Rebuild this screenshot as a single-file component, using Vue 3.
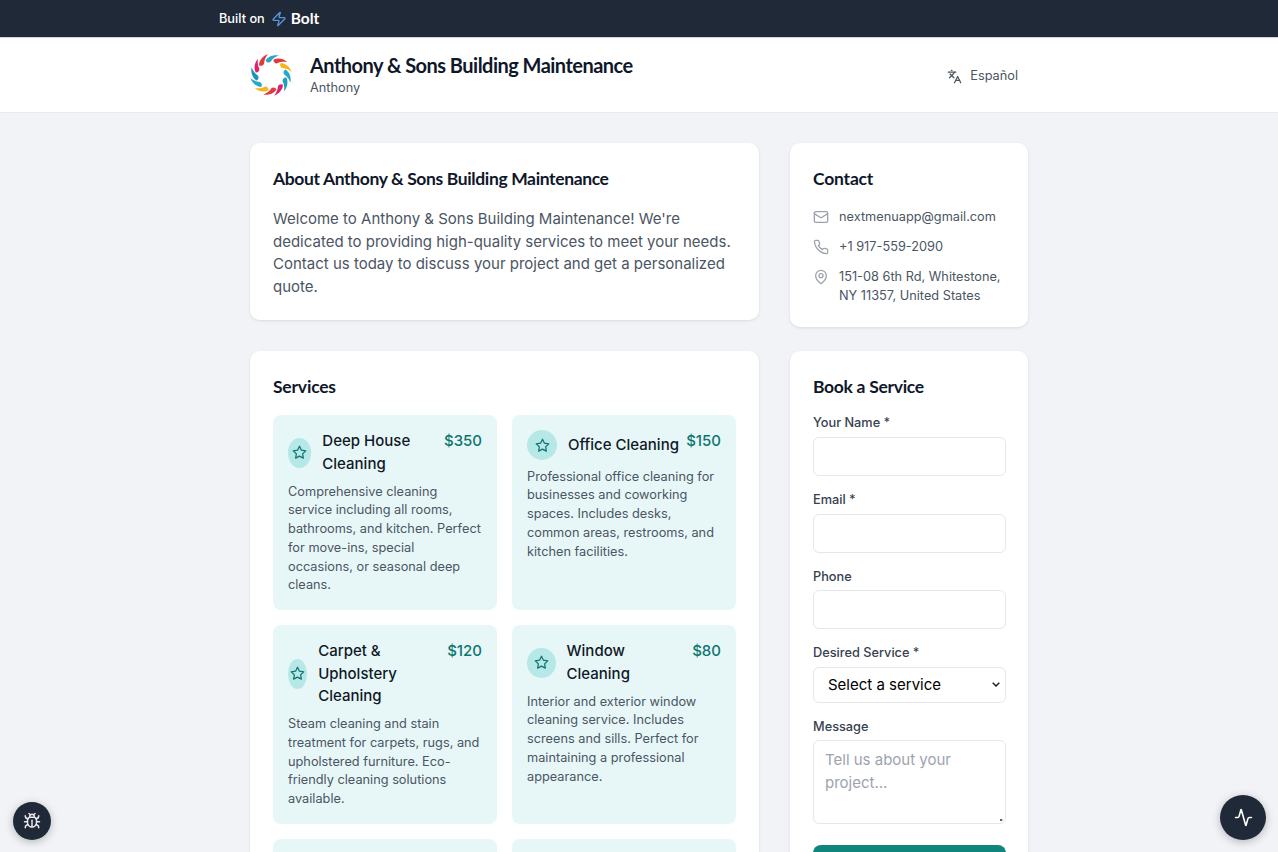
<script setup>
const petalColors = ['#2aa7c9', '#e0393e', '#f7b51c', '#2aa7c9', '#1d9fc0', '#d9236b', '#e0393e', '#f7b51c', '#2aa7c9', '#1d8fc0', '#d9236b', '#e0393e']
const petals = petalColors.map((color, i) => ({ color, transform: `rotate(${i * 30} 20 20)` }))

const services = [
  { name: 'Deep House Cleaning', price: '$350', desc: 'Comprehensive cleaning service including all rooms, bathrooms, and kitchen. Perfect for move-ins, special occasions, or seasonal deep cleans.' },
  { name: 'Office Cleaning', price: '$150', desc: 'Professional office cleaning for businesses and coworking spaces. Includes desks, common areas, restrooms, and kitchen facilities.' },
  { name: 'Carpet & Upholstery Cleaning', price: '$120', desc: 'Steam cleaning and stain treatment for carpets, rugs, and upholstered furniture. Eco-friendly cleaning solutions available.' },
  { name: 'Window Cleaning', price: '$80', desc: 'Interior and exterior window cleaning service. Includes screens and sills. Perfect for maintaining a professional appearance.' },
  { name: '', price: '', desc: '' },
  { name: '', price: '', desc: '' }
]
</script>

<template>
  <div class="page">
    <div class="topbar">
      <div class="topbar-inner">
        <span class="built">Built on</span>
        <svg class="bolt-icon" viewBox="0 0 24 24" fill="none" stroke="currentColor" stroke-width="2" stroke-linecap="round" stroke-linejoin="round"><path d="M4 14a1 1 0 0 1-.78-1.63l9.9-10.2a.5.5 0 0 1 .86.46l-1.92 6.02A1 1 0 0 0 13 10h7a1 1 0 0 1 .78 1.63l-9.9 10.2a.5.5 0 0 1-.86-.46l1.92-6.02A1 1 0 0 0 11 14z"/></svg>
        <span class="bolt">Bolt</span>
      </div>
    </div>

    <header class="header">
      <div class="header-inner">
        <div class="brand">
          <svg class="logo" viewBox="0 0 40 40">
            <path v-for="(p, i) in petals" :key="i" :fill="p.color" :transform="p.transform" d="M14.8 6.2 C16.8 2.7 22 .4 27.3 1.5 C24.5 2.5 21.6 4.4 19.6 7.4 C18.2 8.7 15.6 8.2 14.8 6.2 Z"/>
          </svg>
          <div class="brand-text">
            <h1>Anthony &amp; Sons Building Maintenance</h1>
            <p>Anthony</p>
          </div>
        </div>
        <div class="lang">
          <svg class="lang-icon" viewBox="0 0 24 24" fill="none" stroke="currentColor" stroke-width="2" stroke-linecap="round" stroke-linejoin="round"><path d="m5 8 6 6"/><path d="m4 14 6-6 2-3"/><path d="M2 5h12"/><path d="M7 2h1"/><path d="m22 22-5-10-5 10"/><path d="M14 18h6"/></svg>
          <span>Español</span>
        </div>
      </div>
    </header>

    <main class="main">
      <section class="card about">
        <h2>About Anthony &amp; Sons Building Maintenance</h2>
        <p>Welcome to Anthony &amp; Sons Building Maintenance! We're dedicated to providing high-quality services to meet your needs. Contact us today to discuss your project and get a personalized quote.</p>
      </section>

      <section class="card contact">
        <h2>Contact</h2>
        <div class="contact-list">
          <div class="contact-row">
            <svg viewBox="0 0 24 24" fill="none" stroke="currentColor" stroke-width="2" stroke-linecap="round" stroke-linejoin="round"><rect x="2" y="4" width="20" height="16" rx="2"/><path d="m22 7-8.97 5.7a1.94 1.94 0 0 1-2.06 0L2 7"/></svg>
            <span>nextmenuapp@gmail.com</span>
          </div>
          <div class="contact-row">
            <svg viewBox="0 0 24 24" fill="none" stroke="currentColor" stroke-width="2" stroke-linecap="round" stroke-linejoin="round"><path d="M22 16.92v3a2 2 0 0 1-2.18 2 19.79 19.79 0 0 1-8.63-3.07 19.5 19.5 0 0 1-6-6 19.79 19.79 0 0 1-3.07-8.67A2 2 0 0 1 4.11 2h3a2 2 0 0 1 2 1.72 12.84 12.84 0 0 0 .7 2.81 2 2 0 0 1-.45 2.11L8.09 9.91a16 16 0 0 0 6 6l1.27-1.27a2 2 0 0 1 2.11-.45 12.84 12.84 0 0 0 2.81.7A2 2 0 0 1 22 16.92z"/></svg>
            <span>+1 917-559-2090</span>
          </div>
          <div class="contact-row">
            <svg viewBox="0 0 24 24" fill="none" stroke="currentColor" stroke-width="2" stroke-linecap="round" stroke-linejoin="round"><path d="M20 10c0 6-8 12-8 12s-8-6-8-12a8 8 0 0 1 16 0Z"/><circle cx="12" cy="10" r="3"/></svg>
            <span>151-08 6th Rd, Whitestone, NY 11357, United States</span>
          </div>
        </div>
      </section>

      <section class="card services">
        <h2>Services</h2>
        <div class="service-grid">
          <article v-for="(s, i) in services" :key="i" class="service">
            <div v-if="s.name" class="service-head">
              <div class="service-title">
                <div class="star-wrap">
                  <svg viewBox="0 0 24 24" fill="none" stroke="currentColor" stroke-width="2" stroke-linecap="round" stroke-linejoin="round"><polygon points="12 2 15.09 8.26 22 9.27 17 14.14 18.18 21.02 12 17.77 5.82 21.02 7 14.14 2 9.27 8.91 8.26 12 2"/></svg>
                </div>
                <h3>{{ s.name }}</h3>
              </div>
              <span class="price">{{ s.price }}</span>
            </div>
            <p v-if="s.desc">{{ s.desc }}</p>
          </article>
        </div>
      </section>

      <section class="card booking">
        <h2>Book a Service</h2>
        <form class="form" @submit.prevent>
          <label class="field"><span>Your Name *</span><input type="text" /></label>
          <label class="field"><span>Email *</span><input type="email" /></label>
          <label class="field"><span>Phone</span><input type="tel" /></label>
          <label class="field"><span>Desired Service *</span>
            <select><option>Select a service</option></select>
          </label>
          <label class="field"><span>Message</span>
            <textarea rows="3" placeholder="Tell us about your project..."></textarea>
          </label>
          <button class="submit" type="submit"></button>
        </form>
      </section>
    </main>

    <button class="fab fab-left" aria-label="Debug">
      <svg viewBox="0 0 24 24" fill="none" stroke="currentColor" stroke-width="2" stroke-linecap="round" stroke-linejoin="round"><path d="m8 2 1.88 1.88"/><path d="M14.12 3.88 16 2"/><path d="M9 7.13v-1a3.003 3.003 0 1 1 6 0v1"/><path d="M12 20c-3.3 0-6-2.7-6-6v-3a4 4 0 0 1 4-4h4a4 4 0 0 1 4 4v3c0 3.3-2.7 6-6 6"/><path d="M12 20v-9"/><path d="M6.53 9C4.6 8.8 3 7.1 3 5"/><path d="M6 13H2"/><path d="M3 21c0-2.1 1.7-3.9 3.8-4"/><path d="M20.97 5c0 2.1-1.6 3.8-3.5 4"/><path d="M22 13h-4"/><path d="M17.2 17c2.1.1 3.8 1.9 3.8 4"/></svg>
    </button>
    <button class="fab fab-right" aria-label="Activity">
      <svg viewBox="0 0 24 24" fill="none" stroke="currentColor" stroke-width="2" stroke-linecap="round" stroke-linejoin="round"><path d="M22 12h-2.48a2 2 0 0 0-1.93 1.46l-2.35 8.36a.25.25 0 0 1-.48 0L9.24 2.18a.25.25 0 0 0-.48 0l-2.35 8.36A2 2 0 0 1 4.49 12H2"/></svg>
    </button>
  </div>
</template>

<style>
html, body { margin: 0; background: #f1f3f7; }
</style>

<style scoped>
* { box-sizing: border-box; }
.page {
  height: 852px;
  overflow: hidden;
  background: #f1f3f7;
  font-family: Inter, "Liberation Sans", sans-serif;
  font-size: 12.75px;
  line-height: 18.75px;
  color: #111827;
}
.topbar { height: 38px; background: #1f2937; border-bottom: 1px solid #d1d5db; }
.topbar-inner {
  width: 840px;
  margin: 0 auto;
  height: 37px;
  display: flex;
  align-items: center;
  color: #fff;
}
.built { padding-top: 1px; font-size: 12.75px; font-weight: 500; }
.bolt-icon { width: 16px; height: 16px; margin-left: 6px; color: #5b93d8; }
.bolt { margin-left: 4px; font-size: 15.5px; font-weight: 700; font-family: Lato, sans-serif; }

.header { height: 75px; background: #fff; border-bottom: 1px solid #e9ebef; }
.header-inner {
  width: 778px;
  height: 74px;
  margin: 0 auto;
  display: flex;
  align-items: center;
  justify-content: space-between;
}
.brand { display: flex; align-items: center; }
.logo { width: 42px; height: 42px; margin-right: 18px; }
.brand-text h1 {
  margin: 0;
  font-family: Lato, sans-serif;
  font-size: 20px;
  font-weight: 700;
  letter-spacing: -0.53px;
  line-height: 23px;
  color: #0f172a;
}
.brand-text p { margin: 2px 0 0; font-size: 12.75px; line-height: 18px; color: #4b5563; }
.lang { display: flex; align-items: center; gap: 8px; padding: 2px 10px 0 0; color: #4b5563; font-size: 12.75px; }
.lang-icon { width: 15px; height: 15px; }

.main {
  width: 778px;
  margin: 30px auto 0;
  display: grid;
  grid-template-columns: 509px 238px;
  column-gap: 31px;
  row-gap: 24px;
  align-items: start;
}
.card {
  background: #fff;
  border-radius: 10px;
  padding: 23px 22px 22px 23px;
  box-shadow: 0 1px 3px rgba(0, 0, 0, 0.1);
}
.contact { padding-bottom: 21.5px; }
h2 {
  margin: 0;
  font-family: Lato, sans-serif;
  font-size: 17.5px;
  font-weight: 700;
  letter-spacing: -0.2px;
  line-height: 25px;
  color: #0f172a;
}
.about h2 { letter-spacing: -0.37px; }
.booking h2 { letter-spacing: -0.3px; }
.about p {
  margin: 17px 0 0;
  font-size: 15px;
  line-height: 22.5px;
  color: #4b5563;
}
.contact-list { margin-top: 17px; display: flex; flex-direction: column; gap: 11.25px; }
.contact-row { display: flex; align-items: flex-start; gap: 10px; color: #4b5563; font-size: 12.75px; line-height: 18.75px; }
.contact-row svg { width: 16px; height: 16px; flex: none; margin-top: 1px; color: #9ca3af; }

.service-grid { margin-top: 16px; display: grid; grid-template-columns: 224px 224px; gap: 15px; }
.service { background: #e7f7f8; border-radius: 8px; padding: 15px; min-height: 60px; }
.service-head { display: flex; justify-content: space-between; gap: 7px; }
.service-title { display: flex; align-items: center; gap: 11px; }
.star-wrap {
  flex-shrink: 0.85;
  width: 30px;
  height: 30px;
  border-radius: 50%;
  background: #b5e8e6;
  display: flex;
  align-items: center;
  justify-content: center;
  color: #0f766e;
}
.star-wrap svg { width: 15px; height: 15px; flex: none; }
h3 { margin: 0; font-size: 15px; font-weight: 500; line-height: 22.5px; color: #111827; }
.price { font-size: 15px; font-weight: 500; line-height: 22.5px; color: #0f766e; }
.service p { margin: 7.5px 0 0; font-size: 12.75px; line-height: 18.75px; color: #4b5563; }

.form { margin-top: 15.2px; display: flex; flex-direction: column; gap: 15px; }
.field { display: flex; flex-direction: column; gap: 4px; }
.field span { font-size: 12.75px; font-weight: 500; line-height: 18.67px; color: #374151; }
input, textarea, select {
  width: 100%;
  border: 1px solid #e5e7eb;
  border-radius: 6px;
  background: #fff;
  font-family: inherit;
}
input { height: 39px; }
select {
  height: 35.9px;
  padding: 0 10px 0 14px;
  font-size: 15px;
  color: #000;
  appearance: none;
  background-image: url("data:image/svg+xml,%3Csvg xmlns='http://www.w3.org/2000/svg' width='8' height='5' viewBox='0 0 8 5'%3E%3Cpath d='M.7.7 4 4 7.3.7' fill='none' stroke='%23222' stroke-width='1.5'/%3E%3C/svg%3E");
  background-repeat: no-repeat;
  background-position: right 5px center;
}
textarea { height: 84px; padding: 8px 11px; font-size: 15px; line-height: 22.5px; resize: vertical; display: block; }
textarea::placeholder { color: #9ca3af; }
textarea::-webkit-resizer { background: radial-gradient(circle at 75% 80%, #666 1px, transparent 1.5px); }
.submit { height: 40px; margin-top: 6px; border: 0; border-radius: 8px; background: #0f857b; }

.fab {
  position: fixed;
  border: 0;
  padding: 0;
  border-radius: 50%;
  background: #1f2937;
  color: #fff;
  display: flex;
  align-items: center;
  justify-content: center;
  box-shadow: 0 2px 8px rgba(0, 0, 0, 0.25);
}
.fab-left { left: 13px; top: 802px; width: 38px; height: 38px; color: #e5e7eb; }
.fab-left svg { width: 18px; height: 18px; }
.fab-right { left: 1220px; top: 795px; width: 46px; height: 45px; }
.fab-right svg { width: 19px; height: 19px; }
</style>
